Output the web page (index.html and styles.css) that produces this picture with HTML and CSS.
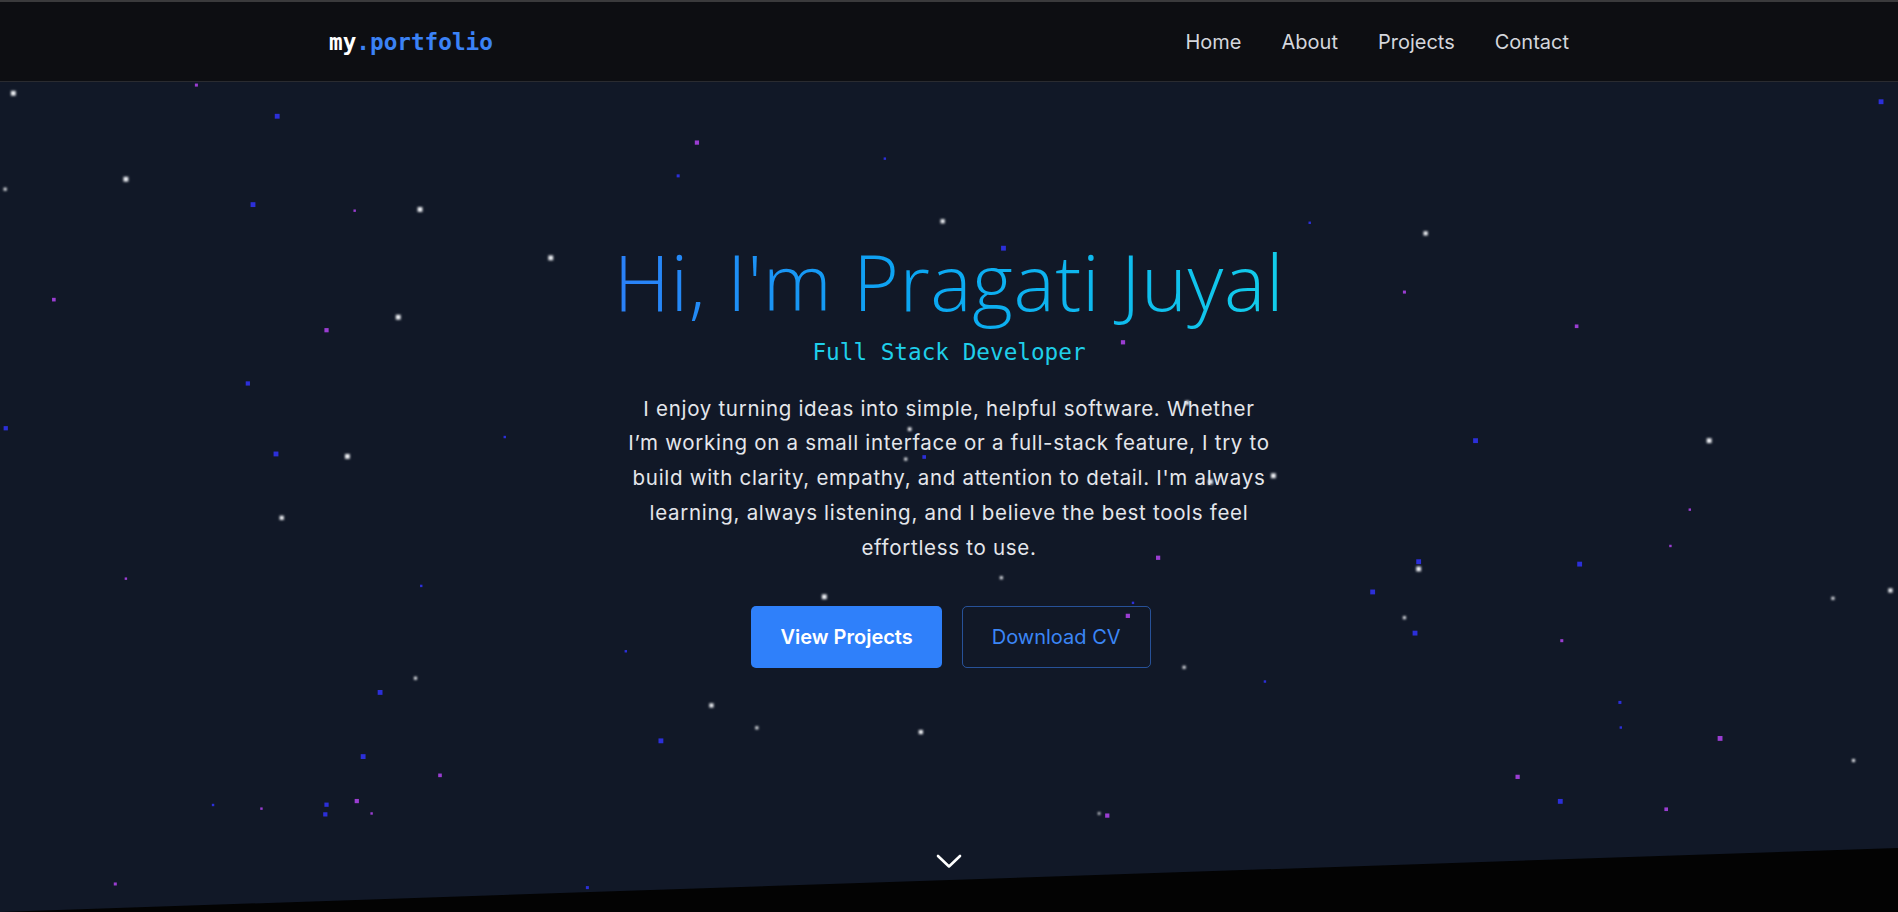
FILE: index.html
```html
<!DOCTYPE html>
<html lang="en">
<head>
<meta charset="utf-8">
<title>my.portfolio</title>
<link rel="stylesheet" href="styles.css">
</head>
<body>
<header class="site-header">
  <div class="container nav-bar">
    <a class="logo" href="#">my<span class="logo-accent">.portfolio</span></a>
    <nav class="nav-links">
      <a href="#">Home</a>
      <a href="#">About</a>
      <a href="#">Projects</a>
      <a href="#">Contact</a>
    </nav>
  </div>
</header>

<section class="hero">
  <svg class="stars" viewBox="0 67.7 1568 685.7" preserveAspectRatio="none" aria-hidden="true">
    <defs>
      <filter id="glow" x="-100%" y="-100%" width="300%" height="300%">
        <feGaussianBlur stdDeviation="0.7"/>
      </filter>
    </defs>
    <g class="star-white" filter="url(#glow)">
      <rect x="9" y="75" width="4" height="4"/>
      <rect x="3" y="155" width="2.5" height="2.5"/>
      <rect x="102" y="146" width="4" height="4"/>
      <rect x="345" y="171" width="4" height="4"/>
      <rect x="777" y="181" width="3.5" height="3.5"/>
      <rect x="1176" y="191" width="3.5" height="3.5"/>
      <rect x="453" y="211" width="4" height="4"/>
      <rect x="327" y="260" width="4" height="4"/>
      <rect x="979" y="331" width="3.5" height="3.5"/>
      <rect x="750" y="353" width="3" height="3"/>
      <rect x="1410" y="362" width="4" height="4"/>
      <rect x="285" y="375" width="4" height="4"/>
      <rect x="747" y="378" width="2.5" height="2.5"/>
      <rect x="1050" y="391" width="4" height="4"/>
      <rect x="998" y="396" width="4" height="4"/>
      <rect x="231" y="426" width="3.5" height="3.5"/>
      <rect x="1170" y="468" width="4" height="4"/>
      <rect x="826" y="476" width="2.5" height="2.5"/>
      <rect x="679" y="491" width="4" height="4"/>
      <rect x="1513" y="493" width="2.5" height="2.5"/>
      <rect x="1560" y="486" width="3.5" height="3.5"/>
      <rect x="1159" y="509" width="2.5" height="2.5"/>
      <rect x="977" y="550" width="2.5" height="2.5"/>
      <rect x="342" y="559" width="2.5" height="2.5"/>
      <rect x="586" y="581" width="3.5" height="3.5"/>
      <rect x="624" y="600" width="2.5" height="2.5"/>
      <rect x="759" y="603" width="3.5" height="3.5"/>
      <rect x="1530" y="627" width="2.5" height="2.5"/>
      <rect x="907" y="671" width="2" height="2"/>
    </g>
    <g class="star-blue">
      <rect x="227" y="94" width="4" height="4"/>
      <rect x="559" y="144" width="2.5" height="2.5"/>
      <rect x="730" y="130" width="2" height="2"/>
      <rect x="1552" y="82" width="4" height="4"/>
      <rect x="207" y="167" width="4" height="4"/>
      <rect x="827" y="203" width="4" height="4"/>
      <rect x="1081" y="183" width="2" height="2"/>
      <rect x="203" y="315" width="3.5" height="3.5"/>
      <rect x="3" y="352" width="3.5" height="3.5"/>
      <rect x="416" y="360" width="2" height="2"/>
      <rect x="1217" y="362" width="4" height="4"/>
      <rect x="226" y="373" width="4" height="4"/>
      <rect x="762" y="376" width="3" height="3"/>
      <rect x="1170" y="462" width="4" height="4"/>
      <rect x="1303" y="464" width="4" height="4"/>
      <rect x="347" y="483" width="2" height="2"/>
      <rect x="1132" y="487" width="4" height="4"/>
      <rect x="935" y="497" width="2" height="2"/>
      <rect x="1167" y="521" width="4" height="4"/>
      <rect x="516" y="537" width="2" height="2"/>
      <rect x="1044" y="562" width="2" height="2"/>
      <rect x="312" y="570" width="4" height="4"/>
      <rect x="1337" y="579" width="2.5" height="2.5"/>
      <rect x="1338" y="600" width="2" height="2"/>
      <rect x="544" y="610" width="4" height="4"/>
      <rect x="298" y="623" width="4" height="4"/>
      <rect x="1287" y="660" width="4" height="4"/>
      <rect x="268" y="663" width="3.5" height="3.5"/>
      <rect x="175" y="664" width="2" height="2"/>
      <rect x="267" y="671" width="3.5" height="3.5"/>
      <rect x="484" y="732" width="2.5" height="2.5"/>
    </g>
    <g class="star-purple">
      <rect x="161" y="69" width="2.5" height="2.5"/>
      <rect x="574" y="116" width="3.5" height="3.5"/>
      <rect x="292" y="173" width="2" height="2"/>
      <rect x="43" y="246" width="3" height="3"/>
      <rect x="1159" y="240" width="2.5" height="2.5"/>
      <rect x="268" y="271" width="3.5" height="3.5"/>
      <rect x="1301" y="268" width="3" height="3"/>
      <rect x="926" y="281" width="3.5" height="3.5"/>
      <rect x="1395" y="420" width="2" height="2"/>
      <rect x="1379" y="450" width="2" height="2"/>
      <rect x="955" y="459" width="3.5" height="3.5"/>
      <rect x="103" y="477" width="2" height="2"/>
      <rect x="930" y="507" width="3.5" height="3.5"/>
      <rect x="1289" y="528" width="2.5" height="2.5"/>
      <rect x="1419" y="608" width="4" height="4"/>
      <rect x="362" y="639" width="3" height="3"/>
      <rect x="1252" y="640" width="3.5" height="3.5"/>
      <rect x="293" y="660" width="3.5" height="3.5"/>
      <rect x="215" y="667" width="2" height="2"/>
      <rect x="1375" y="667" width="3" height="3"/>
      <rect x="306" y="671" width="2" height="2"/>
      <rect x="913" y="672" width="3.5" height="3.5"/>
      <rect x="94" y="729" width="2.5" height="2.5"/>
    </g>
  </svg>

  <div class="hero-content">
    <h1 class="hero-title">Hi, I'm Pragati Juyal</h1>
    <p class="hero-role">Full Stack Developer</p>
    <p class="hero-text">I enjoy turning ideas into simple, helpful software. Whether<br>I’m working on a small interface or a full-stack feature, I try to<br>build with clarity, empathy, and attention to detail. I'm always<br>learning, always listening, and I believe the best tools feel<br>effortless to use.</p>
    <div class="hero-actions">
      <a class="btn btn-primary" href="#">View Projects</a>
      <a class="btn btn-outline" href="#">Download CV</a>
    </div>
  </div>

  <a class="scroll-down" href="#" aria-label="Scroll down">
    <svg width="26" height="15" viewBox="0 0 26 15" fill="none">
      <path d="M2 2 L13 12.5 L24 2" stroke="#ffffff" stroke-width="2.6" stroke-linecap="round" stroke-linejoin="round"/>
    </svg>
  </a>
</section>
</body>
</html>
```

FILE: styles.css
```css
* {
  box-sizing: border-box;
}

html, body {
  margin: 0;
  padding: 0;
}

body {
  background: #030303;
  font-family: Inter, "Noto Sans", sans-serif;
  color: #e5e7eb;
  overflow: hidden;
}

a {
  text-decoration: none;
}

.site-header {
  background: #0d0e12;
  border-top: 2px solid #3a3a3c;
  border-bottom: 1px solid #2a2b30;
}

.container {
  width: 1240px;
  margin: 0 auto;
}

.nav-bar {
  height: 79px;
  display: flex;
  align-items: center;
  justify-content: space-between;
}

.logo {
  font-family: "DejaVu Sans Mono", "Liberation Mono", monospace;
  font-weight: 700;
  font-size: 22.7px;
  color: #ffffff;
  letter-spacing: 0;
}

.logo-accent {
  color: #3b82f6;
}

.nav-links {
  display: flex;
  gap: 40px;
}

.nav-links a {
  color: #d4d6dc;
  font-size: 20px;
  font-weight: 400;
}

.hero {
  position: relative;
  height: 830px;
  background: #111827;
  clip-path: polygon(0 0, 100% 0, 100% 766px, 0 100%);
}

.stars {
  position: absolute;
  inset: 0;
  width: 100%;
  height: 100%;
}

.star-white rect {
  fill: #eef0f4;
}

.star-blue rect {
  fill: #2c2fd8;
}

.star-purple rect {
  fill: #9a3dd1;
}

.hero-content {
  position: relative;
  display: flex;
  flex-direction: column;
  align-items: center;
  padding-top: 153px;
  text-align: center;
}

.hero-title {
  margin: 0;
  font-family: "Open Sans", "Noto Sans", sans-serif;
  font-weight: 300;
  font-size: 78px;
  line-height: 1.2;
  letter-spacing: 0.6px;
  background: linear-gradient(90deg, #2b80f8 0%, #0ba6f2 45%, #12cdea 100%);
  -webkit-background-clip: text;
  background-clip: text;
  color: transparent;
}

.hero-role {
  margin: 10px 0 0;
  font-family: "DejaVu Sans Mono", "Liberation Mono", monospace;
  font-size: 22.7px;
  color: #1fcfea;
}

.hero-text {
  margin: 27px 0 0;
  max-width: 720px;
  font-size: 20.5px;
  letter-spacing: 0.7px;
  line-height: 34.8px;
  color: #e4e6eb;
}

.hero-actions {
  display: flex;
  gap: 20px;
  margin-top: 40px;
  transform: translateX(2px);
}

.btn {
  display: inline-block;
  height: 62px;
  line-height: 60px;
  padding: 0 29px;
  border-radius: 5px;
  font-size: 20px;
  border: 1px solid transparent;
}

.btn-primary {
  background: #2f80fa;
  color: #ffffff;
  font-weight: 600;
  padding: 0 28px;
}

.btn-outline {
  border-color: rgba(59, 130, 246, 0.55);
  color: #3b86f6;
  font-weight: 400;
}

.scroll-down {
  position: absolute;
  left: 50%;
  bottom: 43px;
  transform: translateX(-50%);
  display: block;
  line-height: 0;
}
```
